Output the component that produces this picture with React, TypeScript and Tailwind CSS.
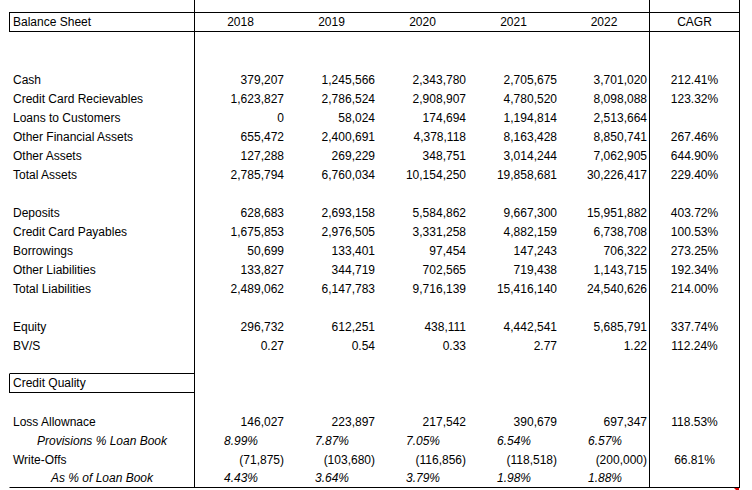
import React from "react";

type RowDef = {
  label?: string;
  vals?: string[];
  cagr?: string;
  kind?: "normal" | "italic" | "box";
  labelBottom?: boolean;
  last?: boolean;
};

const GRID = "grid grid-cols-[186px_91px_91px_91px_91px_91px_90px]";

const rows: RowDef[] = [
  {},
  {},
  { label: "Cash", vals: ["379,207", "1,245,566", "2,343,780", "2,705,675", "3,701,020"], cagr: "212.41%" },
  { label: "Credit Card Recievables", vals: ["1,623,827", "2,786,524", "2,908,907", "4,780,520", "8,098,088"], cagr: "123.32%" },
  { label: "Loans to Customers", vals: ["0", "58,024", "174,694", "1,194,814", "2,513,664"], cagr: "" },
  { label: "Other Financial Assets", vals: ["655,472", "2,400,691", "4,378,118", "8,163,428", "8,850,741"], cagr: "267.46%" },
  { label: "Other Assets", vals: ["127,288", "269,229", "348,751", "3,014,244", "7,062,905"], cagr: "644.90%" },
  { label: "Total Assets", vals: ["2,785,794", "6,760,034", "10,154,250", "19,858,681", "30,226,417"], cagr: "229.40%" },
  {},
  { label: "Deposits", vals: ["628,683", "2,693,158", "5,584,862", "9,667,300", "15,951,882"], cagr: "403.72%" },
  { label: "Credit Card Payables", vals: ["1,675,853", "2,976,505", "3,331,258", "4,882,159", "6,738,708"], cagr: "100.53%" },
  { label: "Borrowings", vals: ["50,699", "133,401", "97,454", "147,243", "706,322"], cagr: "273.25%" },
  { label: "Other Liabilities", vals: ["133,827", "344,719", "702,565", "719,438", "1,143,715"], cagr: "192.34%" },
  { label: "Total Liabilities", vals: ["2,489,062", "6,147,783", "9,716,139", "15,416,140", "24,540,626"], cagr: "214.00%" },
  {},
  { label: "Equity", vals: ["296,732", "612,251", "438,111", "4,442,541", "5,685,791"], cagr: "337.74%" },
  { label: "BV/S", vals: ["0.27", "0.54", "0.33", "2.77", "1.22"], cagr: "112.24%" },
  { labelBottom: true },
  { label: "Credit Quality", kind: "box" },
  {},
  { label: "Loss Allownace", vals: ["146,027", "223,897", "217,542", "390,679", "697,347"], cagr: "118.53%" },
  { label: "Provisions % Loan Book", kind: "italic", vals: ["8.99%", "7.87%", "7.05%", "6.54%", "6.57%"] },
  { label: "Write-Offs", vals: ["(71,875)", "(103,680)", "(116,856)", "(118,518)", "(200,000)"], cagr: "66.81%" },
  { label: "As % of Loan Book", kind: "italic", vals: ["4.43%", "3.64%", "3.79%", "1.98%", "1.88%"], last: true },
];

function DataRow({ r }: { r: RowDef }) {
  const italic = r.kind === "italic";
  const boxed = r.kind === "box";
  const bottomAll = r.last ? "border-b border-b-black" : "";
  const labelBottom = boxed || r.labelBottom || r.last ? "border-b border-b-black" : "";
  const vals = r.vals ?? ["", "", "", "", ""];
  return (
    <div className={`${GRID} h-[19px]`}>
      <div
        className={`flex items-center border-r border-r-black border-l ${
          boxed ? "border-l-black" : "border-l-transparent"
        } ${labelBottom} ${italic ? "justify-center italic" : "pl-[3px]"}`}
      >
        {r.label}
      </div>
      {vals.map((v, i) => (
        <div
          key={i}
          className={`flex items-center ${bottomAll} ${i === 4 ? "border-r border-r-black" : ""} ${
            italic ? "justify-start pl-[29px] italic" : "justify-end pr-[2px]"
          }`}
        >
          {v}
        </div>
      ))}
      <div className={`flex items-center justify-center border-r border-r-black ${bottomAll}`}>{r.cagr}</div>
    </div>
  );
}

export default function App() {
  return (
    <div className="relative w-[752px] h-[490px] overflow-hidden bg-white text-black font-['Liberation_Sans',Arial,sans-serif] text-[12px] leading-none">
      <div className="ml-[9px] w-[731px]">
        {/* top partial row */}
        <div className={`${GRID} h-[12px]`}>
          <div className="border-r border-r-black" />
          <div />
          <div />
          <div />
          <div />
          <div className="border-r border-r-black" />
          <div className="border-r border-r-black" />
        </div>
        {/* header row */}
        <div className={`${GRID} h-[20px]`}>
          <div className="flex items-center border border-black pl-[3px]">Balance Sheet</div>
          {["2018", "2019", "2020", "2021"].map((y) => (
            <div key={y} className="flex items-center justify-center border-y border-black">
              {y}
            </div>
          ))}
          <div className="flex items-center justify-center border-y border-r border-black">2022</div>
          <div className="flex items-center justify-center border-y border-r border-black">CAGR</div>
        </div>
        {rows.map((r, i) => (
          <DataRow key={i} r={r} />
        ))}
      </div>
      <svg className="absolute left-[734px] top-[488px]" width="5" height="5" viewBox="0 0 5 5">
        <polygon points="0,0 5,0 5,5" fill="#e00000" />
      </svg>
    </div>
  );
}
